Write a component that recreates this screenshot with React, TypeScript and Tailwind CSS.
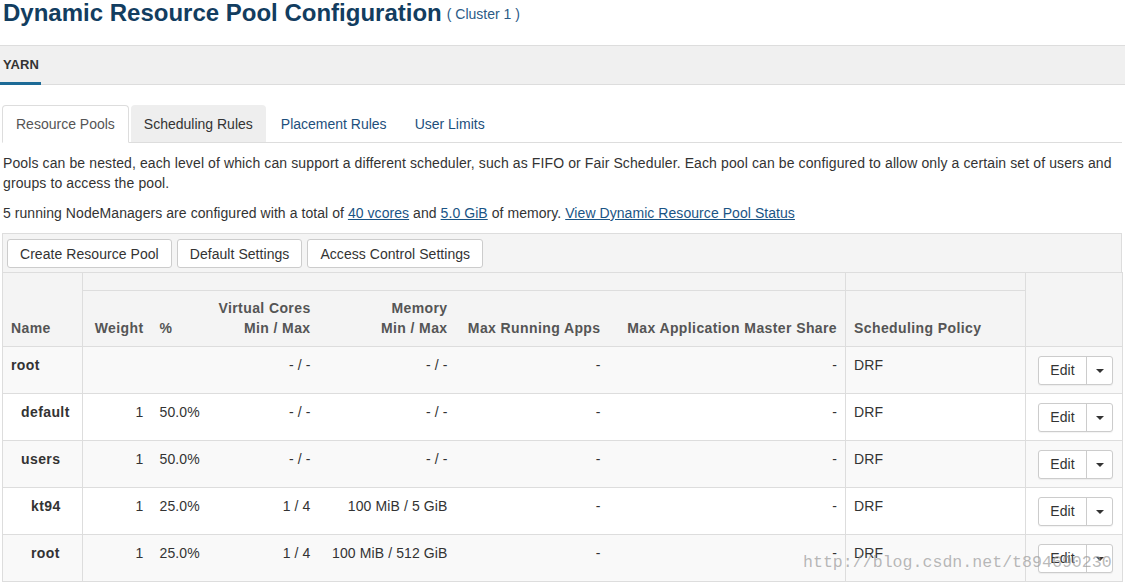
import React from 'react';

type Pool = {
  name: string;
  indent: number;
  weight: string;
  share: string;
  vcores: string;
  memory: string;
};

const pools: Pool[] = [
  { name: 'root', indent: 0, weight: '', share: '', vcores: '- / -', memory: '- / -' },
  { name: 'default', indent: 1, weight: '1', share: '50.0%', vcores: '- / -', memory: '- / -' },
  { name: 'users', indent: 1, weight: '1', share: '50.0%', vcores: '- / -', memory: '- / -' },
  { name: 'kt94', indent: 2, weight: '1', share: '25.0%', vcores: '1 / 4', memory: '100 MiB / 5 GiB' },
  { name: 'root', indent: 2, weight: '1', share: '25.0%', vcores: '1 / 4', memory: '100 MiB / 512 GiB' },
];

const indentClass = ['pl-[8px]', 'pl-[18px]', 'pl-[28px]'];

const ToolButton: React.FC<{ label: string }> = ({ label }) => (
  <button className="h-[29px] px-[12px] bg-white border border-[#ccc] rounded-[3px] text-[14px] text-[#333] leading-none tracking-[0.05px]">
    {label}
  </button>
);

const EditButton: React.FC = () => (
  <div className="inline-flex h-[29px] border border-[#ccc] rounded-[3px] bg-white shadow-[0_1px_1px_rgba(0,0,0,0.05)]">
    <span className="w-[48px] flex items-center justify-center text-[14px] text-[#333] border-r border-[#ccc]">Edit</span>
    <span className="w-[25px] flex items-center justify-center">
      <span className="w-0 h-0 border-x-[4px] border-t-[4px] border-x-transparent border-t-[#333]" />
    </span>
  </div>
);

const App: React.FC = () => {
  return (
    <div className="relative w-[1125px] bg-white text-[14px] text-[#333] tracking-[0.11px] font-['Liberation_Sans',Arial,sans-serif]">
      <div className="h-[45px] pl-[3px] flex items-start">
        <h1 className="text-[24px] leading-[24px] mt-[1px] font-bold tracking-normal text-[#123d60]">Dynamic Resource Pool Configuration</h1>
        <span className="ml-[5px] mt-[7px] text-[14px] leading-[15px] tracking-normal text-[#2b5b86]">( Cluster 1 )</span>
      </div>

      <div className="h-[40px] bg-[#f0f0f0] border-y border-[#ddd] flex">
        <div className="relative pl-[3px] pr-[2px] flex items-center">
          <span className="text-[13px] font-bold text-[#333]">YARN</span>
          <span className="absolute left-0 right-0 -bottom-[1px] h-[3px] bg-[#1d6b97]" />
        </div>
      </div>

      <div className="mt-[20px] mx-[2px] mr-[3px] flex border-b border-[#ddd] h-[38px] tracking-normal">
        <div className="px-[13px] pt-[1px] flex items-center bg-white border border-[#ddd] border-b-white rounded-t-[4px] -mb-[1px] text-[#555]">
          Resource Pools
        </div>
        <div className="ml-[2px] px-[13px] pt-[2px] flex items-center bg-[#eee] rounded-t-[4px] text-[#333]">Scheduling Rules</div>
        <div className="ml-[2px] px-[13px] pt-[2px] flex items-center text-[#1d4f7c]">Placement Rules</div>
        <div className="ml-[2px] px-[13px] pt-[2px] flex items-center text-[#1d4f7c]">User Limits</div>
      </div>

      <p className="mt-[10px] pl-[3px] pr-[4px] leading-[20px]">
        Pools can be nested, each level of which can support a different scheduler, such as FIFO or Fair Scheduler. Each pool can be configured to allow only a certain set of users and groups to access the pool.
      </p>
      <p className="mt-[10px] pl-[3px] leading-[20px] tracking-[0.06px]">
        5 running NodeManagers are configured with a total of{' '}
        <a className="underline text-[#1a5485]">40 vcores</a> and{' '}
        <a className="underline text-[#1a5485]">5.0 GiB</a> of memory.{' '}
        <a className="underline text-[#1a5485]">View Dynamic Resource Pool Status</a>
      </p>

      <div className="mt-[10px] ml-[2px] w-[1120px]">
        <div className="h-[39px] bg-[#f4f4f4] border-x border-t border-[#ddd] flex items-center gap-[5px] pl-[4px] pt-[1px]">
          <ToolButton label="Create Resource Pool" />
          <ToolButton label="Default Settings" />
          <ToolButton label="Access Control Settings" />
        </div>
        <table className="w-[1120px] table-fixed border-collapse">
          <colgroup>
            <col className="w-[80px]" />
            <col className="w-[69px]" />
            <col className="w-[59px]" />
            <col className="w-[108px]" />
            <col className="w-[137px]" />
            <col className="w-[153px]" />
            <col className="w-[237px]" />
            <col className="w-[180px]" />
            <col className="w-[97px]" />
          </colgroup>
          <thead className="bg-[#f4f4f4] text-[#555] font-bold tracking-[0.4px] whitespace-nowrap">
            <tr className="h-[18px]">
              <th rowSpan={2} className="border border-[#ddd] align-bottom text-left px-[8px] pb-[8px] leading-[20px]">Name</th>
              <th colSpan={6} className="border border-[#ddd]" />
              <th className="border border-[#ddd]" />
              <th rowSpan={2} className="border border-[#ddd]" />
            </tr>
            <tr className="h-[56px]">
              <th className="border-y border-[#ddd] align-bottom text-right px-[8px] pb-[8px] leading-[20px]">Weight</th>
              <th className="border-y border-[#ddd] align-bottom text-left px-[8px] pb-[8px] leading-[20px]">%</th>
              <th className="border-y border-[#ddd] align-bottom text-right px-[8px] pb-[8px] leading-[20px]">
                Virtual Cores
                <br />
                Min / Max
              </th>
              <th className="border-y border-[#ddd] align-bottom text-right px-[8px] pb-[8px] leading-[20px]">
                Memory
                <br />
                Min / Max
              </th>
              <th className="border-y border-[#ddd] align-bottom text-right px-[8px] pb-[8px] leading-[20px]">Max Running Apps</th>
              <th className="border-y border-[#ddd] align-bottom text-right px-[8px] pb-[8px] leading-[20px]">Max Application Master Share</th>
              <th className="border border-[#ddd] align-bottom text-left px-[8px] pb-[8px] leading-[20px]">Scheduling Policy</th>
            </tr>
          </thead>
          <tbody>
            {pools.map((p, i) => (
              <tr key={i} className={i % 2 === 0 ? 'bg-[#f9f9f9]' : 'bg-white'}>
                <td className={`border border-[#ddd] h-[47px] align-top pt-[8px] pr-[8px] leading-[20px] font-bold tracking-[0.4px] ${indentClass[p.indent]}`}>{p.name}</td>
                <td className="border-y border-[#ddd] align-top pt-[8px] px-[8px] leading-[20px] text-right">{p.weight}</td>
                <td className="border-y border-[#ddd] align-top pt-[8px] px-[8px] leading-[20px]">{p.share}</td>
                <td className="border-y border-[#ddd] align-top pt-[8px] px-[8px] leading-[20px] text-right">{p.vcores}</td>
                <td className="border-y border-[#ddd] align-top pt-[8px] px-[8px] leading-[20px] text-right whitespace-nowrap">{p.memory}</td>
                <td className="border-y border-[#ddd] align-top pt-[8px] px-[8px] leading-[20px] text-right">-</td>
                <td className="border-y border-[#ddd] align-top pt-[8px] px-[8px] leading-[20px] text-right">-</td>
                <td className="border border-[#ddd] align-top pt-[8px] px-[8px] leading-[20px]">DRF</td>
                <td className="border border-[#ddd] align-top pt-[9px] pl-[12px]">
                  <EditButton />
                </td>
              </tr>
            ))}
          </tbody>
        </table>
      </div>

      <div className="absolute left-[803px] top-[552px] text-[16.6px] leading-[22px] tracking-normal text-[#9a9a9a]/70 font-['Liberation_Mono',monospace] pointer-events-none">
        http://blog.csdn.net/t894690230
      </div>
    </div>
  );
};

export default App;
